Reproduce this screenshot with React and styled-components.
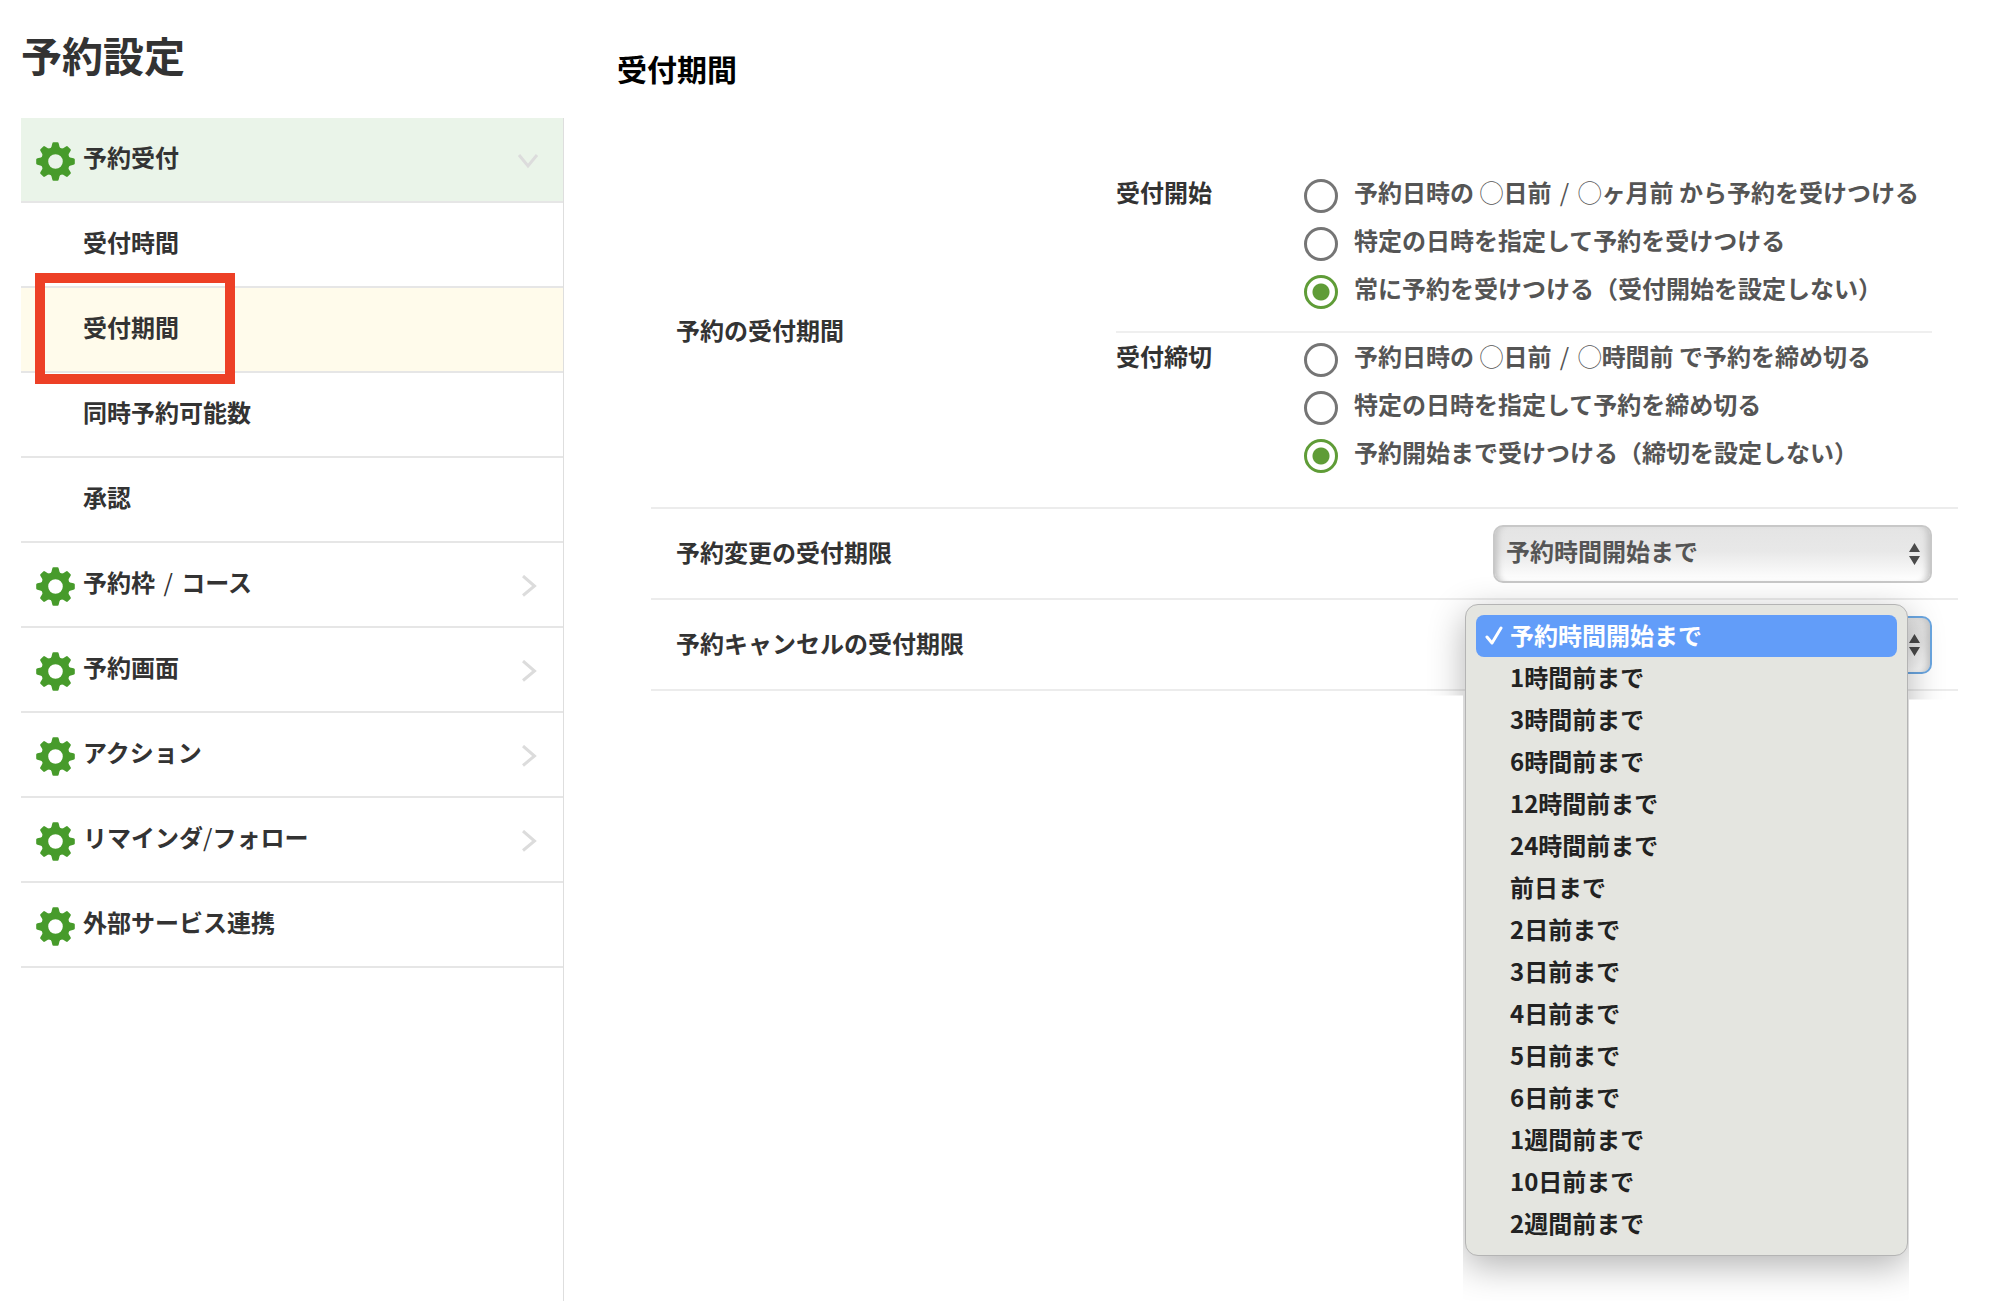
import React, { useState } from "react";
import styled, { createGlobalStyle } from "styled-components";

const GlobalStyle = createGlobalStyle`
  * {
    box-sizing: border-box;
  }
  body {
    margin: 0;
    background: #fff;
    color: #333;
    font-family: "Noto Sans CJK JP", sans-serif;
    font-size: 24px;
    font-weight: 700;
    line-height: 36px;
  }
`;

const Page = styled.div`
  display: flex;
  min-height: 100vh;
`;

const Sidebar = styled.aside`
  display: flex;
  flex-direction: column;
  flex: none;
  width: 564px;
  padding-left: 21px;
`;

const PageTitle = styled.h1`
  margin: 24px 0 34px;
  font-size: 41px;
  line-height: 60px;
`;

const Nav = styled.nav`
  flex: 1;
  border-right: 1px solid #dedede;
`;

const NavLink = styled.a`
  position: relative;
  display: flex;
  align-items: center;
  gap: 8px;
  height: 85px;
  padding: 0 24px 0 ${({ $sub }) => ($sub ? "62px" : "15px")};
  border-bottom: 2px solid #e6e6e6;
  background: ${({ $tone }) =>
    $tone === "open" ? "#eaf4e9" : $tone === "current" ? "#fffbeb" : "none"};
  color: inherit;
  text-decoration: none;
`;

const NavText = styled.span`
  flex: 1;
  padding-bottom: 6px;
`;

const NavIcon = styled.svg`
  flex: none;
  margin-top: 3px;
`;

const Marker = styled.span`
  position: absolute;
  top: -15px;
  left: 14px;
  z-index: 1;
  width: 200px;
  height: 111px;
  border: 10px solid #ed4026;
  pointer-events: none;
`;

const Light = styled.span`
  font-weight: 400;
  ${({ $spaced }) => $spaced && "padding: 0 3px;"}
`;

const Main = styled.main`
  flex: 1;
  padding: 48px 41px 48px 53px;
`;

const Heading = styled.h2`
  margin: 0 0 64px;
  color: #000;
  font-size: 30px;
  line-height: 40px;
`;

const Settings = styled.div`
  margin-left: 34px;
`;

const Row = styled.div`
  display: grid;
  grid-template-columns: 1fr ${({ $wide }) => ($wide ? "816px" : "439px")};
  align-items: center;
  min-height: 91px;
  padding: 0 26px 0 25px;
  border-bottom: 2px solid #ececec;
`;

const RowTitle = styled.div`
  padding: 0;
`;

const RowLabel = styled.label`
  padding-bottom: 4px;
`;

const Groups = styled.div`
  padding: 20px 0 27px;
`;

const Group = styled.div`
  display: flex;
  & + & {
    padding-top: 3px;
    border-top: 2px solid #efefef;
  }
  &:not(:last-child) {
    padding-bottom: 15px;
  }
`;

const GroupTitle = styled.div`
  width: 188px;
  padding: 2px 0 10px;
`;

const Option = styled.label`
  display: flex;
  align-items: center;
  gap: 16px;
  height: 48px;
  color: #555;
`;

const OptionText = styled.span`
  padding-bottom: 8px;
`;

const Radio = styled.input`
  appearance: none;
  width: 34px;
  height: 34px;
  margin: 0;
  border: 3px solid #757575;
  border-radius: 50%;
  background: #fff;
  &:checked {
    border-color: #5f9c37;
    background: radial-gradient(circle, #5f9c37 8px, #fff 9px);
  }
`;

const SelectBox = styled.div`
  position: relative;
  > svg {
    position: absolute;
    top: 18px;
    right: 12px;
    pointer-events: none;
  }
`;

const StyledSelect = styled.select`
  appearance: none;
  display: block;
  width: 100%;
  height: 58px;
  padding: 0 40px 6px 11px;
  border: 2px solid ${({ $active }) => ($active ? "#6ba7e2" : "#c8c8c8")};
  border-radius: 10px;
  background: linear-gradient(#e4e4e4, #e8e8e8 45%, #fff);
  box-shadow: inset 8px 0 6px -5px #c4c4c4, inset -8px 0 6px -5px #c4c4c4;
  color: #555;
  font: inherit;
  outline: none;
`;

/* the menu's shadow only spreads sideways next to the settings rows */
const Menu = styled.ul`
  position: absolute;
  top: -12px;
  right: 24px;
  z-index: 2;
  width: 443px;
  margin: 0;
  padding: 10px;
  border: 1px solid #b4b4b4;
  border-radius: 13px;
  background: #e4e5e0;
  box-shadow: 0 10px 36px rgba(0, 0, 0, 0.3);
  clip-path: polygon(
    -50px -50px,
    calc(100% + 50px) -50px,
    calc(100% + 50px) 96px,
    calc(100% + 1px) 96px,
    calc(100% + 1px) calc(100% + 50px),
    -2px calc(100% + 50px),
    -2px 92px,
    -50px 92px
  );
  list-style: none;
`;

const MenuItem = styled.li`
  display: flex;
  align-items: center;
  height: 42px;
  padding: 0 9px 2px;
  border-radius: 8px;
  background: ${({ $selected }) => ($selected ? "#629df9" : "none")};
  color: ${({ $selected }) => ($selected ? "#fff" : "#222")};
  cursor: default;
`;

const CheckSlot = styled.span`
  display: flex;
  width: 25px;
`;

const Gear = () => (
  <NavIcon width="39" height="39" viewBox="-19.5 -19.5 39 39">
    <circle r="10.8" fill="none" stroke="#479b2b" strokeWidth="7" />
    {[0, 45, 90, 135, 180, 225, 270, 315].map((angle) => (
      <path
        key={angle}
        transform={`rotate(${angle})`}
        fill="#479b2b"
        d="M-6 -12 Q-3.6 -14 -3.2 -18 Q-3 -19.3 -2 -19.3 H2 Q3 -19.3 3.2 -18 Q3.6 -14 6 -12Z"
      />
    ))}
  </NavIcon>
);

const Chevron = ({ open }) => (
  <NavIcon width="22" height="22" viewBox="0 0 22 22">
    <path
      d={open ? "M2 5 L11 16 L20 5" : "M6 1 L17.5 11 L6 20.5"}
      fill="none"
      stroke="#dcdcdc"
      strokeWidth="3"
    />
  </NavIcon>
);

const Arrows = () => (
  <svg width="11" height="22" viewBox="0 0 11 22">
    <path d="M5.5 0 L11 9 H0Z M0 13 H11 L5.5 22Z" fill="#4a4a4a" />
  </svg>
);

const Check = () => (
  <svg width="18" height="20" viewBox="0 0 18 20">
    <path
      d="M2 12 L7 18 L16 3"
      fill="none"
      stroke="#fff"
      strokeWidth="3"
      strokeLinecap="round"
      strokeLinejoin="round"
    />
  </svg>
);

const navItems = [
  { text: "予約受付", tone: "open", icon: true, arrow: true, open: true },
  { text: "受付時間" },
  { text: "受付期間", tone: "current", marked: true },
  { text: "同時予約可能数" },
  { text: "承認" },
  { text: "予約枠 / コース", icon: true, arrow: true },
  { text: "予約画面", icon: true, arrow: true },
  { text: "アクション", icon: true, arrow: true },
  { text: "リマインダ/フォロー", icon: true, arrow: true },
  { text: "外部サービス連携", icon: true },
];

const groups = [
  {
    name: "start",
    title: "受付開始",
    options: [
      "予約日時の ◯日前 / ◯ヶ月前 から予約を受けつける",
      "特定の日時を指定して予約を受けつける",
      "常に予約を受けつける（受付開始を設定しない）",
    ],
  },
  {
    name: "deadline",
    title: "受付締切",
    options: [
      "予約日時の ◯日前 / ◯時間前 で予約を締め切る",
      "特定の日時を指定して予約を締め切る",
      "予約開始まで受けつける（締切を設定しない）",
    ],
  },
];

const limits = [
  "予約時間開始まで",
  "1時間前まで",
  "3時間前まで",
  "6時間前まで",
  "12時間前まで",
  "24時間前まで",
  "前日まで",
  "2日前まで",
  "3日前まで",
  "4日前まで",
  "5日前まで",
  "6日前まで",
  "1週間前まで",
  "10日前まで",
  "2週間前まで",
];

// circles and slashes are set in the regular weight
const lighten = (text) =>
  text.split(/( \/ |[◯/])/).map((part, i) =>
    i % 2 ? (
      <Light key={i} $spaced={part === " / "}>
        {part}
      </Light>
    ) : (
      part
    )
  );

const LimitSelect = ({ id, value, onChange, active, children }) => (
  <SelectBox>
    <StyledSelect
      id={id}
      value={value}
      $active={active}
      onChange={(e) => onChange(e.target.value)}
    >
      {limits.map((limit) => (
        <option key={limit}>{limit}</option>
      ))}
    </StyledSelect>
    <Arrows />
    {children}
  </SelectBox>
);

const App = () => {
  const [change, setChange] = useState(limits[0]);
  const [cancel, setCancel] = useState(limits[0]);

  return (
    <>
      <GlobalStyle />
      <Page>
        <Sidebar>
          <PageTitle>予約設定</PageTitle>
          <Nav>
            {navItems.map((item) => (
              <NavLink
                key={item.text}
                href="#"
                $sub={!item.icon}
                $tone={item.tone}
              >
                {item.icon && <Gear />}
                <NavText>{lighten(item.text)}</NavText>
                {item.arrow && <Chevron open={item.open} />}
                {item.marked && <Marker />}
              </NavLink>
            ))}
          </Nav>
        </Sidebar>
        <Main>
          <Heading>受付期間</Heading>
          <Settings>
            <Row $wide>
              <RowTitle>予約の受付期間</RowTitle>
              <Groups>
                {groups.map((group) => (
                  <Group
                    key={group.name}
                    role="radiogroup"
                    aria-labelledby={`${group.name}-title`}
                  >
                    <GroupTitle id={`${group.name}-title`}>
                      {group.title}
                    </GroupTitle>
                    <div>
                      {group.options.map((option, i) => (
                        <Option key={option}>
                          <Radio
                            type="radio"
                            name={group.name}
                            defaultChecked={i === 2}
                          />
                          <OptionText>{lighten(option)}</OptionText>
                        </Option>
                      ))}
                    </div>
                  </Group>
                ))}
              </Groups>
            </Row>
            <Row>
              <RowLabel htmlFor="change-limit">予約変更の受付期限</RowLabel>
              <LimitSelect
                id="change-limit"
                value={change}
                onChange={setChange}
              />
            </Row>
            <Row>
              <RowLabel htmlFor="cancel-limit">
                予約キャンセルの受付期限
              </RowLabel>
              <LimitSelect
                id="cancel-limit"
                value={cancel}
                onChange={setCancel}
                active
              >
                <Menu role="listbox" aria-label="予約キャンセルの受付期限">
                  {limits.map((limit) => (
                    <MenuItem
                      key={limit}
                      role="option"
                      aria-selected={limit === cancel}
                      $selected={limit === cancel}
                      onClick={() => setCancel(limit)}
                    >
                      <CheckSlot>{limit === cancel && <Check />}</CheckSlot>
                      {limit}
                    </MenuItem>
                  ))}
                </Menu>
              </LimitSelect>
            </Row>
          </Settings>
        </Main>
      </Page>
    </>
  );
};

export default App;
